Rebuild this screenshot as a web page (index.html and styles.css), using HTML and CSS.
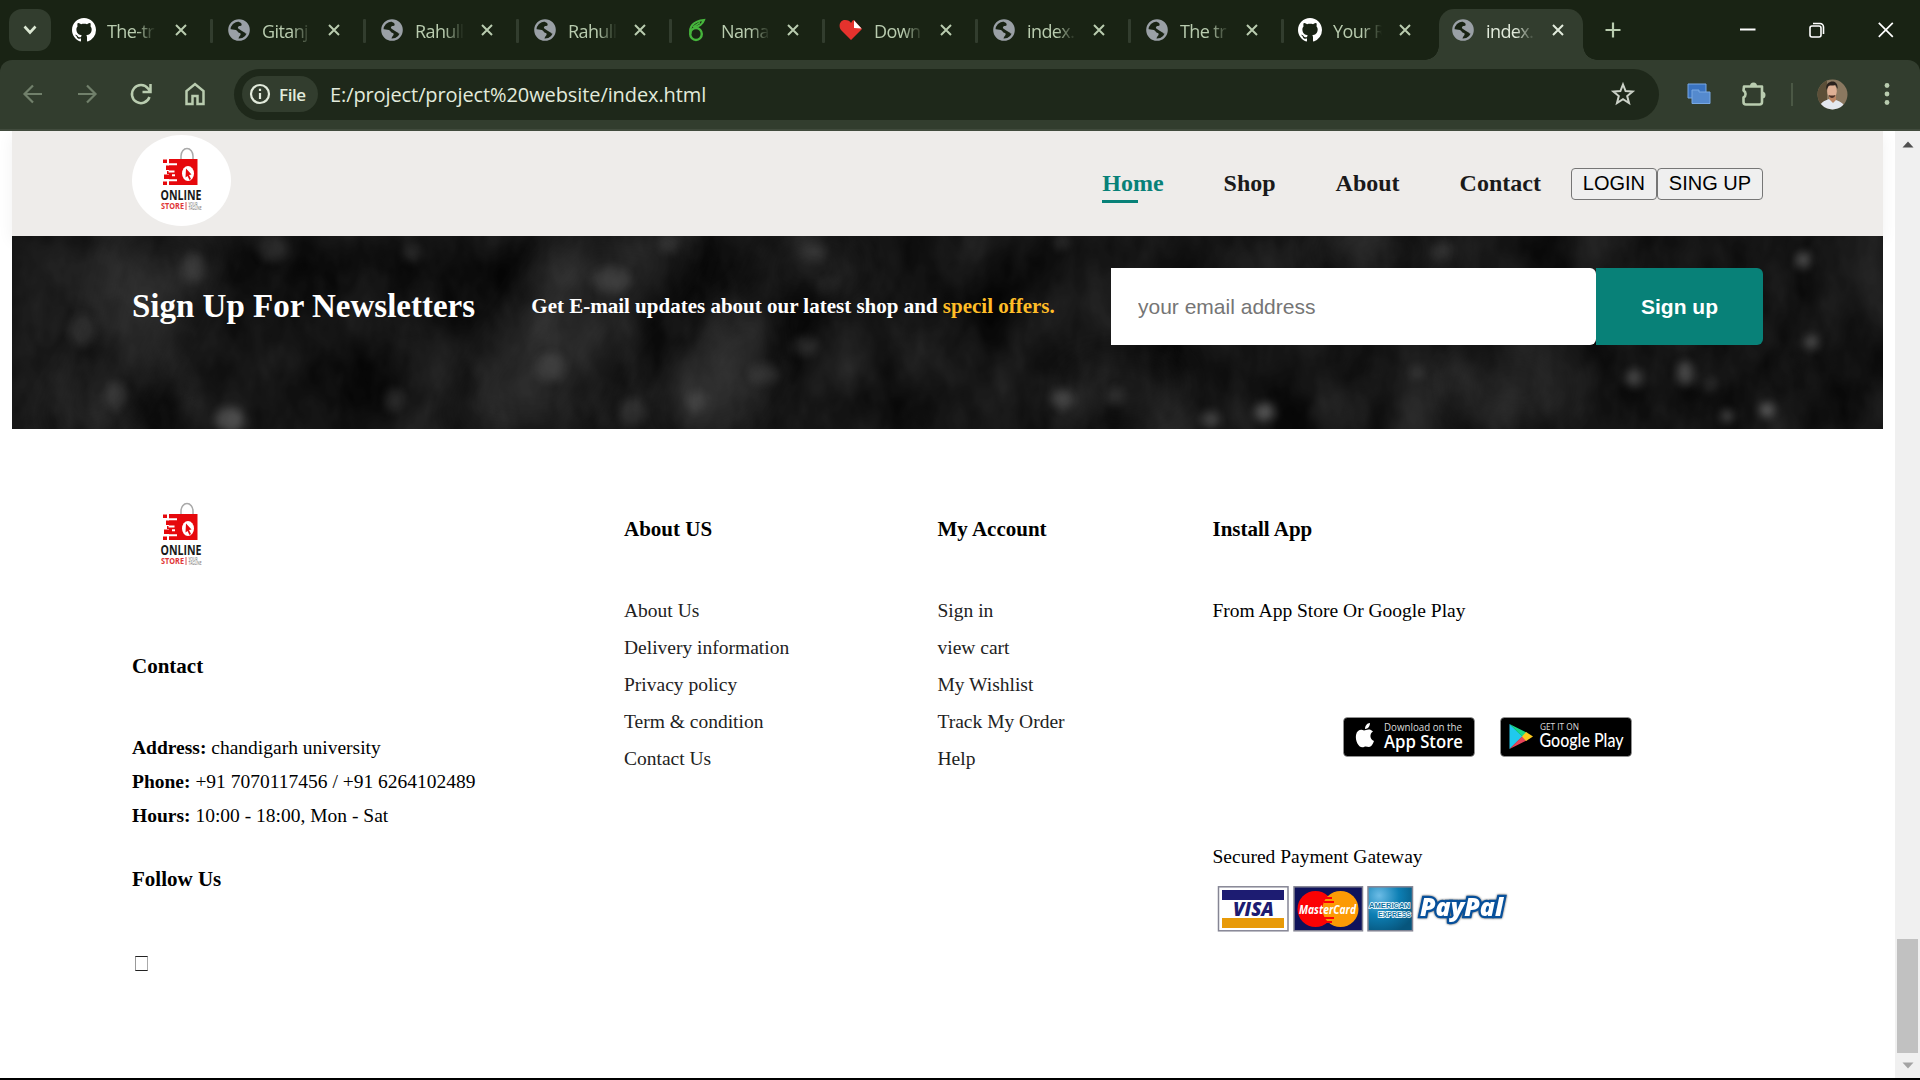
FILE: index.html
```html
<!DOCTYPE html>
<html lang="en">
<head>
<meta charset="utf-8">
<title>index.html</title>
<link rel="stylesheet" href="styles.css">
</head>
<body>
<svg class="defs" width="0" height="0" aria-hidden="true">
  <symbol id="github" viewBox="0 0 16 16"><path fill="#fff" d="M8 0C3.58 0 0 3.58 0 8c0 3.54 2.29 6.53 5.47 7.59.4.07.55-.17.55-.38 0-.19-.01-.82-.01-1.49-2.01.37-2.53-.49-2.69-.94-.09-.23-.48-.94-.82-1.13-.28-.15-.68-.52-.01-.53.63-.01 1.08.58 1.23.82.72 1.21 1.87.87 2.33.66.07-.52.28-.87.51-1.07-1.78-.2-3.64-.89-3.64-3.95 0-.87.31-1.59.82-2.15-.08-.2-.36-1.02.08-2.12 0 0 .67-.21 2.2.82.64-.18 1.32-.27 2-.27s1.36.09 2 .27c1.53-1.04 2.2-.82 2.2-.82.44 1.1.16 1.92.08 2.12.51.56.82 1.27.82 2.15 0 3.07-1.87 3.75-3.65 3.95.29.25.54.73.54 1.48 0 1.07-.01 1.93-.01 2.2 0 .21.15.46.55.38A8.01 8.01 0 0 0 16 8c0-4.42-3.58-8-8-8z"/></symbol>
  <symbol id="globe" viewBox="0 0 24 24"><circle cx="12" cy="12" r="9.7" fill="#192314" stroke="#9aa0a6" stroke-width="2.2"/><path fill="#9aa0a6" d="M11 2C14 1.500 18 3 20 6C22 9 22 12 21 15L19 16C18 14 16 14 15 13L12 11C10 10 11 8 13 8C15 8 15 6 14 5C13 4 11 4 11 2zM2.500 11L9 12C11 13 11 15 13 15C14.500 16 13 18 12 19L11 22C5 21 1.500 16 2.500 11z"/></symbol>
  <symbol id="close" viewBox="0 0 12 12"><path d="M1 1l10 10M11 1L1 11" fill="none" stroke="currentColor" stroke-width="2"/></symbol>
  <symbol id="logo" viewBox="0 0 99 91">
    <path d="M49 30v-9a6 7.500 0 0 1 12 0v9" fill="none" stroke="#a9a9a9" stroke-width="1.500"/>
    <path fill="#e6080c" d="M37 24h28.500v26H37zM31 24.500h4V28h-4zM31 46.500h4V50h-4zM34 30.500h6V35h-6zM35 36h6v3h-6zM32 39.500h8V44h-8z"/>
    <path d="M36.500 29.300h8.500M36.500 36.500h6M40 40.200h3M37 45.200h8" stroke="#fff" stroke-width="2"/>
    <ellipse cx="56" cy="38.500" rx="6" ry="7.500" fill="#fff"/>
    <path fill="#e6080c" d="M54 33.500l5.500 6-2.500.5 2 4-1.500 1-2-4-2 1.500z"/>
    <text x="28.500" y="65" class="logo-main" textLength="41" lengthAdjust="spacingAndGlyphs">ONLINE</text>
    <text x="29" y="74" class="logo-sub" textLength="23" lengthAdjust="spacingAndGlyphs">STORE</text>
    <path d="M54 67v8" stroke="#dd5151" stroke-width="1"/>
    <text x="56.500" y="70.500" class="logo-tag" textLength="9" lengthAdjust="spacingAndGlyphs">YOUR</text>
    <text x="56.500" y="74.500" class="logo-tag" textLength="13" lengthAdjust="spacingAndGlyphs">TAGLINE</text>
  </symbol>
</svg>

<header class="browser">
  <div class="tabstrip">
    <button class="tab-search"><svg width="14" height="10" viewBox="0 0 14 10"><path d="M1.500 1.500L7 7.500l5.500-6" fill="none" stroke="#dce8d3" stroke-width="2.600"/></svg></button>
    <div class="tabs">
      <div class="tab first"><svg class="fav"><use href="#github"/></svg><span>The-tr</span><svg class="x"><use href="#close"/></svg></div>
      <div class="tab"><svg class="fav globe"><use href="#globe"/></svg><span>Gitanj</span><svg class="x"><use href="#close"/></svg></div>
      <div class="tab"><svg class="fav globe"><use href="#globe"/></svg><span>Rahull</span><svg class="x"><use href="#close"/></svg></div>
      <div class="tab"><svg class="fav globe"><use href="#globe"/></svg><span>Rahull</span><svg class="x"><use href="#close"/></svg></div>
      <div class="tab"><svg class="fav" viewBox="0 0 24 24"><ellipse cx="10" cy="16" rx="5.800" ry="6" fill="none" stroke="#46b53c" stroke-width="2.400"/><path d="M4.500 16C3 9 7 3 18 2C17 5 14 8.500 8 9" fill="none" stroke="#46b53c" stroke-width="2.200"/><path d="M7 9L14 4.500" stroke="#46b53c" stroke-width="1.500"/></svg><span>Nama</span><svg class="x"><use href="#close"/></svg></div>
      <div class="tab"><svg class="fav" viewBox="0 0 24 24"><path fill="#e5322d" d="M12 22L2 12C-1 8 1 2 6 2C9 2 11 3 12 5C13 3 14 2 15 2L23 11z"/><path fill="#fff" d="M15 2.500l7.500 8-7.500-.5z"/></svg><span>Down</span><svg class="x"><use href="#close"/></svg></div>
      <div class="tab"><svg class="fav globe"><use href="#globe"/></svg><span>index.</span><svg class="x"><use href="#close"/></svg></div>
      <div class="tab"><svg class="fav globe"><use href="#globe"/></svg><span>The tr</span><svg class="x"><use href="#close"/></svg></div>
      <div class="tab"><svg class="fav"><use href="#github"/></svg><span>Your R</span><svg class="x"><use href="#close"/></svg></div>
      <div class="tab active"><svg class="fav globe"><use href="#globe"/></svg><span>index.</span><svg class="x"><use href="#close"/></svg></div>
    </div>
    <svg class="newtab" width="16" height="16" viewBox="0 0 16 16"><path d="M8 .5v15M.5 8h15" stroke="#b9ccaf" stroke-width="2.200"/></svg>
    <div class="window-controls">
      <svg width="16" height="16" viewBox="0 0 16 16"><path d="M0 7.500h15.500" stroke="#fff" stroke-width="2"/></svg>
      <svg width="16" height="16" viewBox="0 0 16 16"><g fill="none" stroke="#fff" stroke-width="1.600"><rect x="1" y="4" width="11" height="11" rx="2"/><path d="M4 1.500h7a3.500 3.500 0 0 1 3.500 3.500v7"/></g></svg>
      <svg width="16" height="16" viewBox="0 0 16 16"><path d="M.8.8l14 14M14.800.8l-14 14" stroke="#fff" stroke-width="1.700"/></svg>
    </div>
  </div>
  <div class="toolbar">
    <svg class="tool" viewBox="0 0 24 24"><path d="M21 12H4M12 3.500L3.500 12l8.500 8.500" fill="none" stroke="#71806b" stroke-width="2.200"/></svg>
    <svg class="tool" viewBox="0 0 24 24"><path d="M3 12h17M12 3.500l8.500 8.500-8.500 8.500" fill="none" stroke="#71806b" stroke-width="2.200"/></svg>
    <svg class="tool" viewBox="0 0 24 24"><path d="M20.500 15A9 9 0 1 1 19 6.500L21 9M21.500 2v8h-8" fill="none" stroke="#b9ccaf" stroke-width="2.500"/></svg>
    <svg class="tool" viewBox="0 0 24 24"><path d="M3.500 22V9L12 2l8.500 7v13h-6v-8h-5v8z" fill="none" stroke="#b9ccaf" stroke-width="2.500"/></svg>
    <div class="omnibox">
      <div class="chip"><svg width="22" height="22" viewBox="0 0 22 22"><circle cx="11" cy="11" r="9" fill="none" stroke="#e2ebdc" stroke-width="2.200"/><path d="M11 10v6M11 5.700v2.300" stroke="#e2ebdc" stroke-width="2.200"/></svg><span>File</span></div>
      <span class="url">E:/project/project%20website/index.html</span>
      <svg class="star" width="26" height="26" viewBox="0 0 26 26"><path d="M13 3.500l2.600 6.600 7 .5-5.400 4.500 1.800 6.900-6-3.900-6 3.900 1.800-6.900-5.400-4.500 7-.5z" fill="none" stroke="#ccd2c8" stroke-width="2"/></svg>
    </div>
    <div class="actions">
      <svg width="24" height="22" viewBox="0 0 24 22"><path d="M1 1h18v8h4v12H5v-6H1z" fill="#3a73c0"/><path d="M5 15V7h7v2h11v11.500H5z" fill="#558ace"/><path d="M1 1h18v8M1 1v14h4V7h7v2h11v11.500H5V15" fill="none" stroke="#78a8e2" stroke-width="1"/></svg>
      <svg class="puzzle" width="28" height="28" viewBox="0 0 28 28"><path d="M4 6.500h18v15.500a2.500 2.500 0 0 1-2.500 2.500H6A2.500 2.500 0 0 1 3.500 22v-4.500a4 4 0 0 0 0-7z" fill="none" stroke="#b9ccaf" stroke-width="2.600" stroke-linejoin="round"/><path d="M10 6a3.500 3.500 0 0 1 7 0zM22 11.500a3.500 3.500 0 0 1 0 7z" fill="#b9ccaf"/></svg>
      <span class="divider"></span>
      <svg class="avatar" width="31" height="31" viewBox="0 0 31 31"><clipPath id="face"><circle cx="15.500" cy="15.500" r="15"/></clipPath><g clip-path="url(#face)"><path fill="#8a7860" d="M0 0h31v31H0z"/><path fill="#5c4f38" d="M0 0h10v31H0z"/><path fill="#e4e8ef" d="M2 31c1-8 5-9 10-11l7 1c5 2 9 4 10 10z"/><path fill="#bd8664" d="M12 15h7v6l-3 3-4-4z"/><ellipse cx="15" cy="12" rx="4.800" ry="7" fill="#dfb095"/><path fill="#2a211d" d="M9.500 11C7 1 22-1 20.500 10l-2-4c-3 1-5 0-7 1z"/><path d="M11.500 16c1 4 6 4 7 0l-2 .6h-3z" fill="#4c3025"/></g></svg>
      <svg width="6" height="24" viewBox="0 0 6 24"><g fill="#b9ccaf"><circle cx="3" cy="3.500" r="2.400"/><circle cx="3" cy="12" r="2.400"/><circle cx="3" cy="20.500" r="2.400"/></g></svg>
    </div>
  </div>
</header>

<div class="viewport">
  <div class="page">
    <section class="header">
      <svg class="logo round" width="99" height="91"><use href="#logo"/></svg>
      <nav class="nav">
        <a class="current">Home</a><a>Shop</a><a>About</a><a>Contact</a>
        <button class="login">LOGIN</button><button>SING UP</button>
      </nav>
    </section>

    <section class="newsletter">
      <svg class="texture" viewBox="0 0 1871 193" preserveAspectRatio="none" aria-hidden="true">
        <defs>
          <filter id="grain" x="0" y="0" width="100%" height="100%" color-interpolation-filters="sRGB"><feTurbulence type="fractalNoise" baseFrequency="0.016 0.010" numOctaves="4" seed="8"/><feColorMatrix values=".2 .2 0 0 -.11  .2 .2 0 0 -.11  .2 .2 0 0 -.11  0 0 0 0 1"/></filter>
          <filter id="soft" x="-50%" y="-50%" width="200%" height="200%" color-interpolation-filters="sRGB"><feGaussianBlur stdDeviation="5"/></filter>
          <filter id="wide" x="-50%" y="-50%" width="200%" height="200%" color-interpolation-filters="sRGB"><feGaussianBlur stdDeviation="20"/></filter>
        </defs>
        <rect width="1871" height="193" fill="#131313"/>
        <rect width="1871" height="193" filter="url(#grain)" opacity=".7"/>
        <g filter="url(#wide)" fill="#fff" opacity=".08">
          <path d="M110 0h100L150 110 100 193H30L90 100z"/><path d="M560 0h130L600 110 560 193H430z"/><path d="M690 110l60-60 20 60-40 80h-90z"/><ellipse cx="1368" cy="14" rx="70" ry="24"/><ellipse cx="1500" cy="150" rx="60" ry="40"/><ellipse cx="800" cy="30" rx="50" ry="25"/><ellipse cx="1110" cy="150" rx="60" ry="25"/>
        </g>
        <g filter="url(#soft)" fill="#fff" fill-opacity=".1">
          <ellipse cx="260" cy="12" rx="15" ry="13"/><ellipse cx="182" cy="32" rx="11" ry="14"/><ellipse cx="70" cy="94" rx="12" ry="16"/><ellipse cx="104" cy="160" rx="10" ry="14"/><ellipse cx="218" cy="184" rx="14" ry="13" fill-opacity=".2"/><ellipse cx="382" cy="164" rx="9" ry="11"/><ellipse cx="400" cy="17" rx="9" ry="9"/><ellipse cx="539" cy="131" rx="16" ry="14"/><ellipse cx="600" cy="44" rx="20" ry="13"/><ellipse cx="657" cy="8" rx="10" ry="10"/><ellipse cx="802" cy="16" rx="12" ry="9"/><ellipse cx="793" cy="110" rx="13" ry="10"/><ellipse cx="752" cy="138" rx="14" ry="11"/><ellipse cx="685" cy="166" rx="9" ry="10"/><ellipse cx="621" cy="176" rx="13" ry="14"/><ellipse cx="816" cy="50" rx="10" ry="9" fill-opacity=".06"/><ellipse cx="1050" cy="163" rx="11" ry="10" fill-opacity=".17"/><ellipse cx="1103" cy="160" rx="9" ry="9"/><ellipse cx="1048" cy="6" rx="8" ry="8"/><ellipse cx="1253" cy="176" rx="10" ry="9" fill-opacity=".28"/><ellipse cx="1199" cy="184" rx="9" ry="9" fill-opacity=".2"/><ellipse cx="1673" cy="137" rx="8" ry="12" fill-opacity=".24"/><ellipse cx="1622" cy="142" rx="8" ry="9" fill-opacity=".22"/><ellipse cx="1791" cy="24" rx="7" ry="8" fill-opacity=".28"/><ellipse cx="1799" cy="106" rx="7" ry="7" fill-opacity=".25"/><ellipse cx="1755" cy="174" rx="7" ry="7" fill-opacity=".3"/><ellipse cx="1715" cy="180" rx="6" ry="6" fill-opacity=".25"/><ellipse cx="1405" cy="136" rx="7" ry="7"/><ellipse cx="1698" cy="149" rx="7" ry="7"/><ellipse cx="1430" cy="16" rx="10" ry="9"/>
        </g>
      </svg>
      <h4>Sign Up For Newsletters</h4>
      <p>Get E-mail updates about our latest shop and <span>specil offers.</span></p>
      <form class="form"><input type="text" placeholder="your email address"><button type="button">Sign up</button></form>
    </section>

    <footer class="footer">
      <div class="col contact">
        <svg class="logo" width="99" height="91"><use href="#logo"/></svg>
        <h4>Contact</h4>
        <p><strong>Address:</strong> chandigarh university</p>
        <p><strong>Phone:</strong> +91 7070117456 / +91 6264102489</p>
        <p><strong>Hours:</strong> 10:00 - 18:00, Mon - Sat</p>
        <h4 class="follow">Follow Us</h4>
        <i class="missing"></i>
      </div>
      <div class="col about">
        <h4>About US</h4>
        <a>About Us</a><a>Delivery information</a><a>Privacy policy</a><a>Term &amp; condition</a><a>Contact Us</a>
      </div>
      <div class="col account">
        <h4>My Account</h4>
        <a>Sign in</a><a>view cart</a><a>My Wishlist</a><a>Track My Order</a><a>Help</a>
      </div>
      <div class="col install">
        <h4>Install App</h4>
        <p>From App Store Or Google Play</p>
        <div class="stores">
          <svg width="132" height="40" viewBox="0 0 132 40"><rect x=".5" y=".5" width="131" height="39" rx="4" fill="#000" stroke="#999" stroke-width=".7"/><path fill="#fff" d="M23 13c2-1 5-1 7 1.500-4 2.500-3 8 1 9.500-1 3-3 6-5 6-2 0-3-1-5 0-5 2-9-6-8-12 1-5 5-6 8-4.500zM22 12c0-3 2-6 5-6 0 3-2 6-5 6z"/><text class="badge-small" x="41" y="13.500" textLength="78" lengthAdjust="spacingAndGlyphs">Download on the</text><text class="badge-main" x="41" y="31" textLength="79" lengthAdjust="spacingAndGlyphs">App Store</text></svg>
          <svg width="132" height="40" viewBox="0 0 132 40"><rect x=".5" y=".5" width="131" height="39" rx="4" fill="#000" stroke="#999" stroke-width=".7"/><path fill="#20c9ee" d="M9.500 7v25l13-12.500z"/><path fill="#18d88a" d="M9.500 7l18 9-5 4z"/><path fill="#e8455a" d="M9.500 32l18-9-5-4z"/><path fill="#fbc91d" d="M26 15l7 4.500-7 4.500-4-4.500z"/><text class="badge-small get" x="40" y="13" textLength="39" lengthAdjust="spacingAndGlyphs">GET IT ON</text><text class="badge-play" x="39.500" y="30" textLength="84" lengthAdjust="spacingAndGlyphs">Google Play</text></svg>
        </div>
        <p>Secured Payment Gateway</p>
        <svg class="payments" width="300" height="50" viewBox="0 0 300 50">
          <defs><radialGradient id="amex" cx=".25" cy=".2" r=".9"><stop offset="0" stop-color="#6cbce6"/><stop offset=".5" stop-color="#0d7fb4"/><stop offset="1" stop-color="#07557c"/></radialGradient></defs>
          <g stroke="#858594" stroke-width="1.500"><rect x="7.500" y=".8" width="69.500" height="44" fill="#fff"/><rect x="83" y=".8" width="68.500" height="44" fill="#0e125b"/><rect x="157" y=".8" width="44.500" height="44" fill="url(#amex)"/></g>
          <path fill="#1d1c72" d="M11 4h62v10H11z"/><path fill="#e89a08" d="M11 32h62v10H11z"/>
          <text class="visa" x="22" y="30" textLength="41" lengthAdjust="spacingAndGlyphs">VISA</text>
          <circle cx="104.500" cy="23" r="18" fill="#fc0204"/><circle cx="129.500" cy="23" r="18" fill="#fc9a05"/><path d="M113 12h8M113 16h10M113 32h10M115 36h6" stroke="#fc0204" stroke-width="2"/>
          <text class="mc" x="88" y="27.500" textLength="57" lengthAdjust="spacingAndGlyphs">MasterCard</text>
          <text class="amex" x="158" y="22" textLength="41" lengthAdjust="spacingAndGlyphs">AMERICAN</text><text class="amex" x="167" y="30.500" textLength="33" lengthAdjust="spacingAndGlyphs">EXPRESS</text>
          <text class="paypal" x="209" y="30" textLength="83" lengthAdjust="spacingAndGlyphs">PayPal</text>
        </svg>
      </div>
    </footer>
  </div>
  <div class="scrollbar">
    <svg class="up" width="12" height="7" viewBox="0 0 12 7"><path d="M.5 6.500L6 .5l5.500 6z" fill="#505050"/></svg>
    <div class="thumb"></div>
    <svg class="down" width="12" height="7" viewBox="0 0 12 7"><path d="M.5.5L6 6.500 11.500.5z" fill="#a3a3a3"/></svg>
  </div>
</div>
</body>
</html>
```
FILE: styles.css
```css
* { box-sizing: border-box; margin: 0; padding: 0; }
body { width: 1920px; height: 1080px; overflow: hidden; background: #000; font-family: "Liberation Serif", "Times New Roman", serif; color: #000; }
button, input { font-family: "Liberation Sans", Arial, sans-serif; }
svg { flex: none; }
.defs { position: absolute; }

/* browser chrome */
.browser { height: 131px; background: #192314; font-family: "Open Sans", "Noto Sans", sans-serif; }
.tabstrip { display: flex; height: 60px; align-items: center; padding-left: 9px; }
.tab-search { width: 42px; height: 42px; border: 0; border-radius: 13px; background: #323d2e; display: flex; align-items: center; justify-content: center; }
.tabs { display: flex; height: 60px; margin-left: 7px; }
.tab { position: relative; width: 153px; height: 60px; display: flex; align-items: center; padding-left: 16px; color: #b9ccaf; }
.tab.first { padding-left: 14px; }
.tab.first .x { margin-left: 19px; }
.tab + .tab:not(.active)::before { content: ""; position: absolute; left: -1px; top: 19px; width: 3px; height: 24px; background: #323d2e; border-radius: 1px; }
.fav { width: 24px; height: 24px; }
.tab .x { width: 12px; height: 12px; margin-left: 17px; }
.tab span { width: 49px; margin: 2px 0 0 11px; overflow: hidden; white-space: nowrap; font-size: 18px; line-height: 26px; letter-spacing: -.6px; -webkit-mask-image: linear-gradient(90deg, #000 60%, transparent 100%); mask-image: linear-gradient(90deg, #000 60%, transparent 100%); }
.tab.active { color: #e2ebdc; isolation: isolate; }
.tab.active::before { content: ""; position: absolute; z-index: -1; left: 4px; top: 9px; width: 144px; height: 51px; border-radius: 15px 15px 0 0; background: #323d2e; }
.tab.active::after { content: ""; position: absolute; z-index: -1; left: -10px; bottom: 0; width: 172px; height: 14px; background: radial-gradient(circle at 0 0, transparent 13.500px, #323d2e 14px) left / 14px 14px no-repeat, radial-gradient(circle at 100% 0, transparent 13.500px, #323d2e 14px) right / 14px 14px no-repeat; }
.newtab { margin-left: 17px; }
.window-controls { display: flex; gap: 53px; margin: 0 26px 0 auto; }
.toolbar { display: flex; height: 71px; padding: 0 30px 1px 21px; align-items: center; background: #323d2e; border-bottom: 2px solid #414b3d; border-radius: 12px 12px 0 0; }
.tool { width: 24px; height: 24px; margin-right: 30px; }
.tool:nth-of-type(4) { margin-right: 27px; }
.omnibox { flex: none; width: 1425px; height: 51px; display: flex; align-items: center; border-radius: 26px; background: #1e281a; padding: 0 23px 0 8px; color: #e2ebdc; }
.chip { width: 76px; height: 36px; border-radius: 18px; background: #323d2e; display: flex; align-items: center; gap: 8px; padding-left: 7px; font-size: 17px; font-weight: 600; letter-spacing: -.4px; }
.url { margin-left: 12px; font-size: 20px; letter-spacing: -.1px; white-space: nowrap; }
.star { margin-left: auto; }
.actions { display: flex; flex: 1; align-items: center; justify-content: flex-end; }
.puzzle { margin-left: 29px; }
.divider { flex: none; width: 2px; height: 23px; background: #4b5845; margin-left: 23px; }
.avatar { margin: 0 36px 0 24px; }

/* page */
.viewport { display: flex; height: 947px; background: #fff; overflow: hidden; }
.page { width: 1895px; padding: 0 12px; }
.header { display: flex; justify-content: space-between; align-items: flex-start; height: 105px; padding: 4px 120px 0; background: #eeecea; box-shadow: 0 5px 15px rgba(0, 0, 0, .06); }
.logo { display: block; }
.logo.round { border-radius: 50%; background: #fff; }
.logo-main { font: 700 13.5px "Open Sans", sans-serif; fill: #191919; }
.logo-sub { font: 700 9px "Open Sans", sans-serif; fill: #df3535; }
.logo-tag { font: 4.5px "Open Sans", sans-serif; fill: #666; }
.nav { display: flex; align-items: center; height: 32px; margin-top: 33px; }
.nav a { position: relative; margin: 0 30px; padding-bottom: 2px; font-size: 24px; line-height: 28px; font-weight: 700; color: #1a1a1a; }
.nav a.current { color: #088178; }
.nav a.current::after { content: ""; position: absolute; left: 0; bottom: -4px; width: 36px; height: 3px; background: #088178; }
.nav button { height: 32px; padding: 0 10.9px 2px; border: 1.5px solid #767676; border-radius: 4px; background: #efefef; font-size: 20px; color: #000; }
.newsletter { position: relative; isolation: isolate; display: flex; justify-content: space-between; align-items: flex-start; height: 193px; padding: 32px 120px 0; background: #141414; overflow: hidden; color: #fff; }
.texture { position: absolute; inset: 0; width: 100%; height: 100%; z-index: -1; }
.newsletter h4 { font-size: 33px; line-height: 77px; }
.newsletter p { font-size: 21px; line-height: 76px; font-weight: 700; }
.newsletter p span { color: #ffbd27; }
.form { display: flex; width: 652px; height: 77px; }
.form input { flex: 1; min-width: 0; border: 0; border-radius: 0 6px 6px 0; padding: 0 27px; font-size: 21px; background: #fff; }
.form input::placeholder { color: #757575; }
.form button { width: 167px; border: 0; border-radius: 0 6px 6px 0; background: #088178; color: #fff; font-size: 21px; font-weight: 700; }

/* footer */
.footer { display: grid; grid-template-columns: 492px 313.5px 275px 1fr; padding: 60px 120px 0; }
.col h4 { font-size: 21px; line-height: 24px; margin: 28px 0 51px; }
.col p { font-size: 19.5px; line-height: 34px; }
.col a { display: block; font-size: 19.5px; line-height: 37px; color: #222; }
.contact .logo { margin-top: 1px; }
.contact h4 { margin: 73px 0 53px; }
.contact h4.follow { margin: 34px 0 65px; }
.missing { display: block; width: 13px; height: 15px; margin-left: 3px; border: 1px solid #222; border-left-color: #999; border-right-color: #aaa; }
.install p { line-height: 37px; }
.stores { display: flex; gap: 25.5px; margin: 88px 0 81px 130px; }
.payments { display: block; margin: 11px 0 0 -1.5px; }
.badge-small { font: 10px "Open Sans", sans-serif; fill: #ddd; }
.badge-small.get { font-size: 9.5px; }
.badge-main { font: 600 18px "Open Sans", sans-serif; fill: #fff; }
.badge-play { font: 500 19px Lato, sans-serif; fill: #fff; }
.visa { font: italic 800 20px "Open Sans", sans-serif; fill: #1d1c72; }
.mc { font: italic 700 13px "Open Sans", sans-serif; fill: #fff; }
.amex { font: 700 7.5px "Liberation Sans", sans-serif; fill: #0873a4; stroke: #fff; stroke-width: 1.5px; paint-order: stroke; }
.paypal { font: italic 800 24px "Open Sans", sans-serif; fill: #fff; stroke: #07509b; stroke-width: 4.5px; paint-order: stroke; filter: drop-shadow(0 0 1px #555); }

.scrollbar { width: 25px; background: #f0f0f0; display: flex; flex-direction: column; align-items: center; padding: 10px 0 9px; }
.thumb { width: 21px; height: 115px; margin-top: 791px; background: #c1c1c1; }
.down { margin-top: 9px; }
```
